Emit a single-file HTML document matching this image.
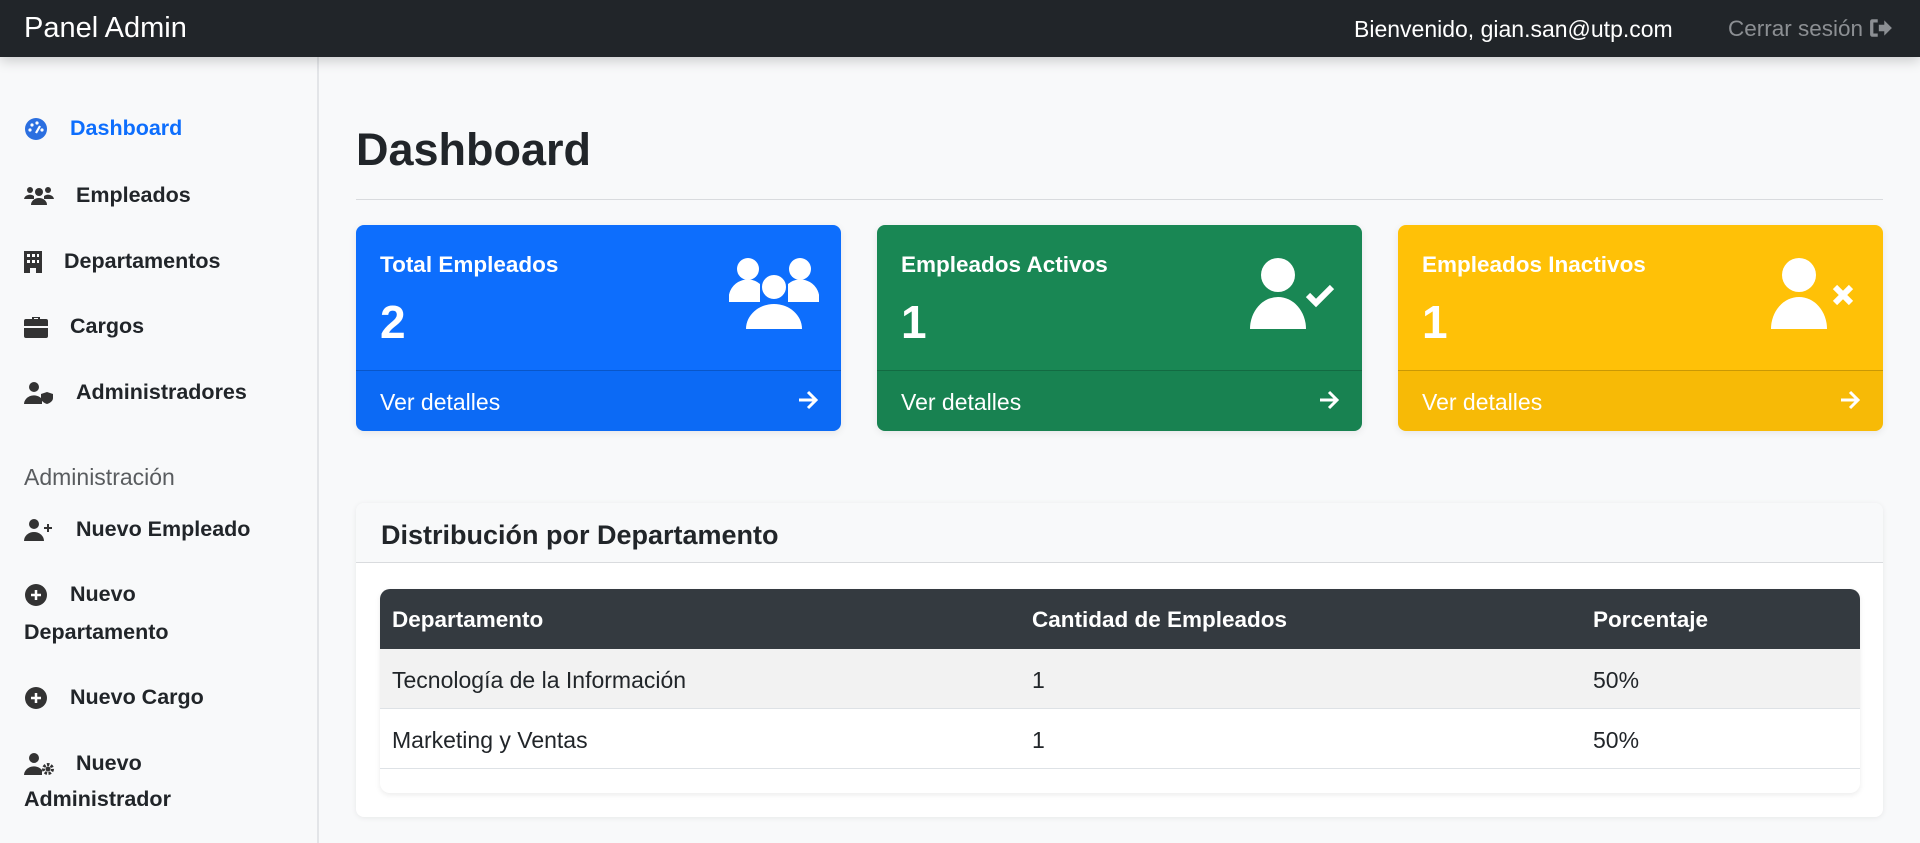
<!DOCTYPE html>
<html><head><meta charset="utf-8"><style>
*{box-sizing:border-box;margin:0;padding:0}
body{width:1920px;height:843px;overflow:hidden;background:#f8f9fa;font-family:"Liberation Sans",sans-serif;color:#212529;position:relative}
.nav{position:absolute;left:0;top:0;width:1920px;height:57px;background:#212529;color:#fff;box-shadow:0 4px 12px rgba(0,0,0,.18);z-index:2}
.nav .brand{position:absolute;left:24px;top:12px;font-size:29px}
.nav .wel{position:absolute;left:1354px;top:16px;font-size:23px}
.nav .out{position:absolute;left:1728px;top:16px;font-size:22.5px;color:#8c8f93}
.side{position:absolute;left:0;top:57px;width:319px;height:786px;border-right:2px solid #e3e5e8;background:#f8f9fa}
.it{position:absolute;left:24px;font-size:21.5px;color:#212529;font-weight:bold;line-height:38px;margin-top:3px}
.it svg{position:absolute;left:0;top:9px}
h1{position:absolute;left:356px;top:124px;font-size:45px;font-weight:bold}
.hr{position:absolute;left:356px;top:199px;width:1527px;height:1px;background:#d9dbde}
.card{position:absolute;top:225px;width:485px;height:206px;border-radius:8px;color:#fff;overflow:hidden;box-shadow:0 2px 8px rgba(0,0,0,.08)}
.card .t{position:absolute;left:24px;top:27px;font-size:22.5px;font-weight:bold}
.card .n{position:absolute;left:24px;top:70px;font-size:46px;font-weight:bold}
.card .f{position:absolute;left:0;top:145px;width:100%;height:61px;border-top:1px solid rgba(0,0,0,.18);background:rgba(0,0,0,.03)}
.card .f span{position:absolute;left:24px;top:18px;font-size:23px}
.card .f svg{position:absolute;right:22px;top:19px}
.card .ic{position:absolute;right:22px;top:32px}
.tc{position:absolute;left:356px;top:503px;width:1527px;height:314px;background:#fff;border-radius:8px;box-shadow:0 1px 6px rgba(0,0,0,.07)}
.tc .h{height:60px;border-bottom:1px solid #d9dbde;background:#f8f9fa;border-radius:8px 8px 0 0;font-size:27px;font-weight:bold;padding:17px 0 0 25px}
.tbl{position:absolute;left:24px;top:86px;width:1480px;height:204px;border-radius:10px;overflow:hidden;box-shadow:0 2px 6px rgba(0,0,0,.08);background:#fff}
.row{position:relative;height:60px;border-bottom:1px solid #dee2e6;font-size:23px}
.row span{position:absolute;top:18px}
.row.hd{background:#343a40;color:#fff;font-weight:bold;border:none;font-size:22.5px}
.row.s{background:#f2f2f2}
</style></head><body>
<div class="nav"><div class="brand">Panel Admin</div><div class="wel">Bienvenido, gian.san@utp.com</div>
<div class="out">Cerrar sesión <svg width="24" height="20" viewBox="0 0 22 18" style="vertical-align:-2px"><path d="M8 1H3a2 2 0 0 0-2 2v12a2 2 0 0 0 2 2h5v-3H4V4h4z" fill="#8c8f93"/><path d="M9 6h5V2l7 7-7 7v-4H9z" fill="#8c8f93"/></svg></div></div>
<div class="side">
<div class="it" style="top:49px;padding-left:46px;color:#0d6efd"><svg width="24" height="22" viewBox="0 0 24 22"><circle cx="12" cy="11" r="11" fill="#2b6fe0"/><circle cx="6" cy="12" r="1.6" fill="#fff"/><circle cx="8" cy="7" r="1.6" fill="#fff"/><circle cx="13" cy="5" r="1.6" fill="#fff"/><circle cx="18" cy="12" r="1.6" fill="#fff"/><path d="M12 15l4-7" stroke="#fff" stroke-width="2.2"/></svg>Dashboard</div>
<div class="it" style="top:116px;padding-left:52px"><svg width="30" height="22" viewBox="0 0 30 22"><circle cx="6" cy="5" r="3" fill="#333"/><circle cx="24" cy="5" r="3" fill="#333"/><circle cx="15" cy="7" r="4" fill="#333"/><path d="M0 14a6 5 0 0 1 10-3v3z M30 14a6 5 0 0 0-10-3v3z M7 20a8 7 0 0 1 16 0z" fill="#333"/></svg>Empleados</div>
<div class="it" style="top:182px;padding-left:40px"><svg width="18" height="22" viewBox="0 0 18 22"><path d="M0 0h18v22h-6v-5H6v5H0z" fill="#333"/><g fill="#fff"><rect x="3" y="3" width="3" height="3"/><rect x="8" y="3" width="3" height="3"/><rect x="13" y="3" width="2" height="3"/><rect x="3" y="9" width="3" height="3"/><rect x="8" y="9" width="3" height="3"/><rect x="13" y="9" width="2" height="3"/></g></svg>Departamentos</div>
<div class="it" style="top:247px;padding-left:46px"><svg width="24" height="22" viewBox="0 0 24 22"><path d="M8 3V1h8v2h6a2 2 0 0 1 2 2v5H0V5a2 2 0 0 1 2-2zm2 0h4V2h-4z M0 12h24v8a2 2 0 0 1-2 2H2a2 2 0 0 1-2-2z" fill="#333"/></svg>Cargos</div>
<div class="it" style="top:313px;padding-left:52px"><svg width="30" height="22" viewBox="0 0 30 22"><circle cx="10" cy="5" r="5" fill="#333"/><path d="M0 22a10 9 0 0 1 18-5v5z" fill="#333"/><path d="M23 10l6 2v4c0 3-3 5-6 6-3-1-6-3-6-6v-4z" fill="#333"/></svg>Administradores</div>
<div class="it" style="top:398px;color:#595c5f;font-weight:normal;font-size:23px">Administración</div>
<div class="it" style="top:450px;padding-left:52px"><svg width="30" height="22" viewBox="0 0 30 22"><circle cx="10" cy="5" r="5" fill="#333"/><path d="M0 22a10 9 0 0 1 20 0z" fill="#333"/><path d="M24 5v8M20 9h8" stroke="#333" stroke-width="2"/></svg>Nuevo Empleado</div>
<div class="it" style="top:515px;padding-left:46px"><svg width="24" height="22" viewBox="0 0 24 22"><circle cx="12" cy="11" r="11" fill="#333"/><path d="M12 6v10M7 11h10" stroke="#fff" stroke-width="2.5"/></svg>Nuevo</div>
<div class="it" style="top:553px">Departamento</div>
<div class="it" style="top:618px;padding-left:46px"><svg width="24" height="22" viewBox="0 0 24 22"><circle cx="12" cy="11" r="11" fill="#333"/><path d="M12 6v10M7 11h10" stroke="#fff" stroke-width="2.5"/></svg>Nuevo Cargo</div>
<div class="it" style="top:684px;padding-left:52px"><svg width="30" height="22" viewBox="0 0 30 22"><circle cx="10" cy="5" r="5" fill="#333"/><path d="M0 22a10 9 0 0 1 18-5v5z" fill="#333"/><circle cx="24" cy="16" r="4.5" fill="none" stroke="#333" stroke-width="3" stroke-dasharray="2.5 1.5"/><circle cx="24" cy="16" r="2.5" fill="#333"/></svg>Nuevo</div>
<div class="it" style="top:720px">Administrador</div>
</div>
<h1>Dashboard</h1><div class="hr"></div>
<div class="card" style="left:356px;background:#0d6efd"><div class="t">Total Empleados</div><div class="n">2</div>
<svg class="ic" width="90" height="74" viewBox="0 0 90 74"><circle cx="19" cy="12" r="11" fill="#fff"/><circle cx="71" cy="12" r="11" fill="#fff"/><path d="M0 45a19 19 0 0 1 31-18v18z M90 45a19 19 0 0 0-31-18v18z" fill="#fff"/><circle cx="45" cy="30" r="13" fill="#fff" stroke="#0d6efd" stroke-width="2"/><path d="M17 72a28 25 0 0 1 56 0z" fill="#fff"/></svg>
<div class="f"><span>Ver detalles</span><svg width="22" height="20" viewBox="0 0 22 20"><path d="M2 10h17M11 2l8 8-8 8" stroke="#fff" stroke-width="3" fill="none"/></svg></div></div>
<div class="card" style="left:877px;background:#198754"><div class="t">Empleados Activos</div><div class="n">1</div>
<svg class="ic" width="90" height="74" viewBox="0 0 90 74"><circle cx="28" cy="18" r="17" fill="#fff"/><path d="M0 72a28 32 0 0 1 56 0z" fill="#fff"/><path d="M58 38l8 8 16-16" stroke="#fff" stroke-width="6" fill="none"/></svg>
<div class="f"><span>Ver detalles</span><svg width="22" height="20" viewBox="0 0 22 20"><path d="M2 10h17M11 2l8 8-8 8" stroke="#fff" stroke-width="3" fill="none"/></svg></div></div>
<div class="card" style="left:1398px;background:#ffc107"><div class="t">Empleados Inactivos</div><div class="n">1</div>
<svg class="ic" width="90" height="74" viewBox="0 0 90 74"><circle cx="28" cy="18" r="17" fill="#fff"/><path d="M0 72a28 32 0 0 1 56 0z" fill="#fff"/><path d="M64 30l16 16M80 30l-16 16" stroke="#fff" stroke-width="6"/></svg>
<div class="f"><span>Ver detalles</span><svg width="22" height="20" viewBox="0 0 22 20"><path d="M2 10h17M11 2l8 8-8 8" stroke="#fff" stroke-width="3" fill="none"/></svg></div></div>
<div class="tc"><div class="h">Distribución por Departamento</div>
<div class="tbl">
<div class="row hd"><span style="left:12px">Departamento</span><span style="left:652px">Cantidad de Empleados</span><span style="left:1213px">Porcentaje</span></div>
<div class="row s"><span style="left:12px">Tecnología de la Información</span><span style="left:652px">1</span><span style="left:1213px">50%</span></div>
<div class="row"><span style="left:12px">Marketing y Ventas</span><span style="left:652px">1</span><span style="left:1213px">50%</span></div>
</div></div>
</body></html>
